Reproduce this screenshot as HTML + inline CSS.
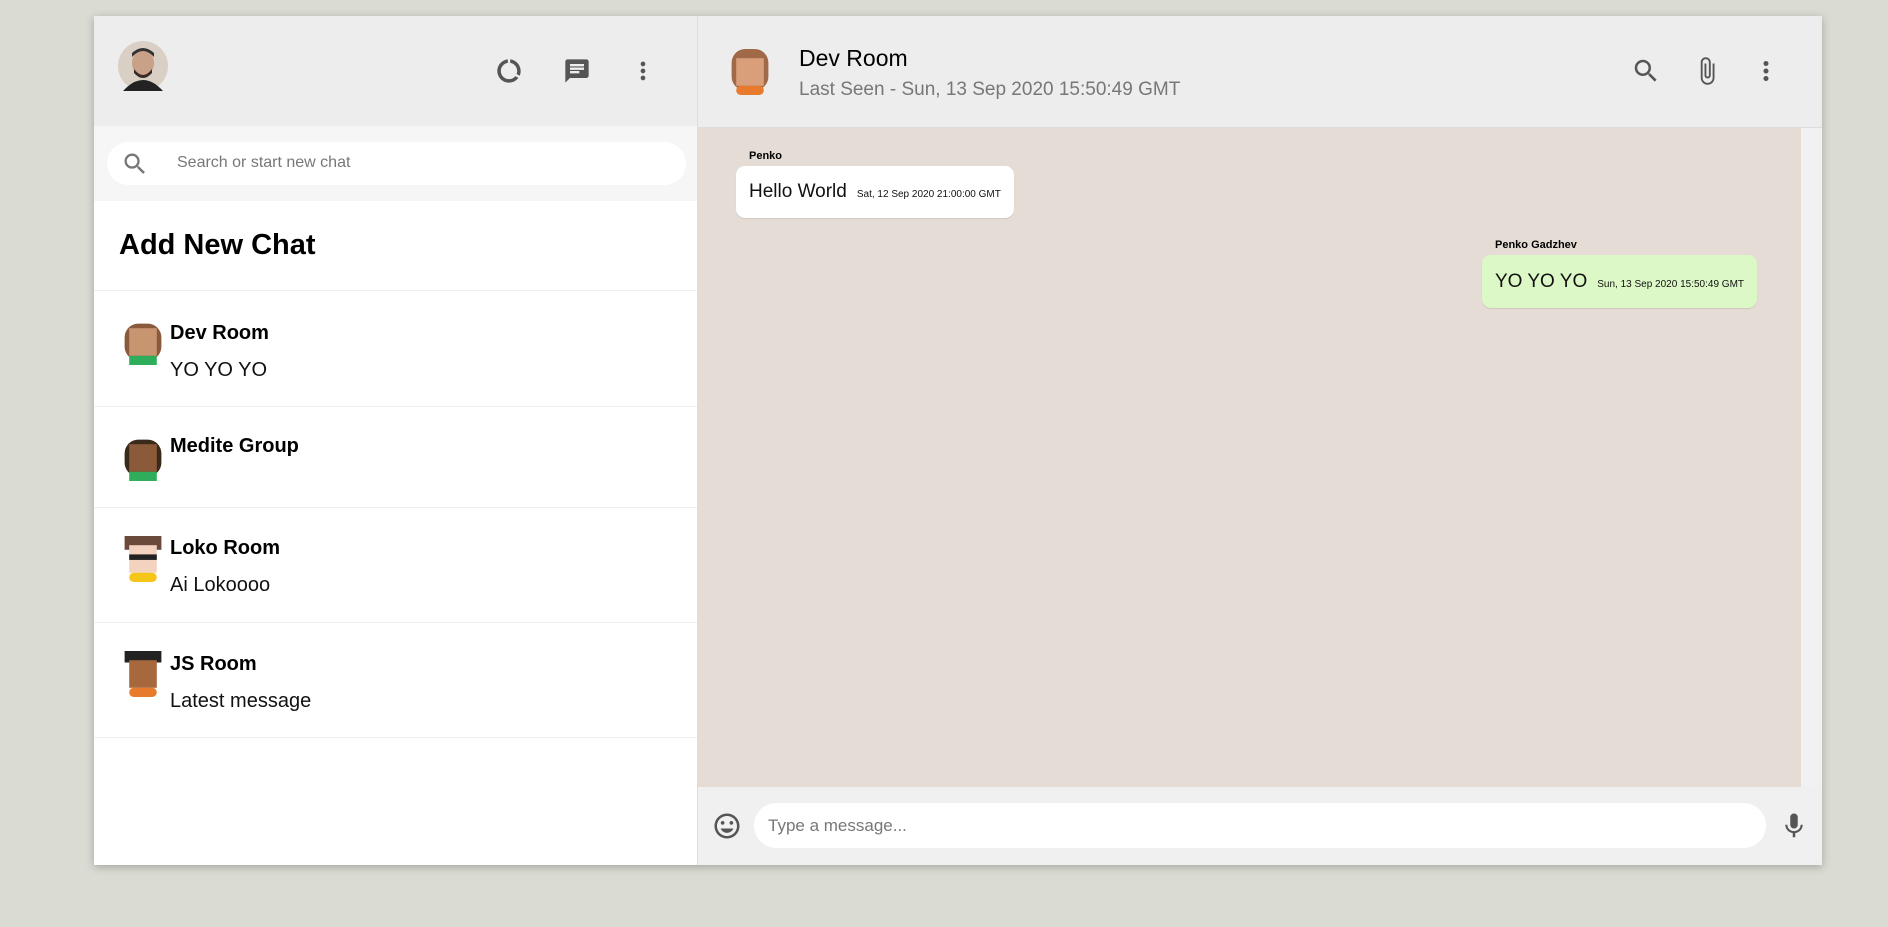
<!DOCTYPE html>
<html><head><meta charset="utf-8"><style>
*{box-sizing:border-box;margin:0;padding:0}
body{width:1888px;height:927px;background:#dadbd3;font-family:"Liberation Sans",sans-serif;position:relative;overflow:hidden}
.app{position:absolute;left:94px;top:16px;width:1728px;height:849px;background:#fff;box-shadow:0 2px 8px rgba(0,0,0,.25);overflow:hidden}
.side{position:absolute;left:0;top:0;width:604px;height:849px;border-right:1px solid #ddd;background:#fff}
.sh{height:110px;background:#ededed;position:relative}
.ico{position:absolute}
.search{height:75px;background:#f6f6f6;position:relative}
.pill{position:absolute;left:13px;top:16px;width:579px;height:43px;background:#fff;border-radius:22px}
.pill span{position:absolute;left:70px;top:12px;font-size:16px;color:#777}
.add{height:90px;border-bottom:1px solid #eee;position:relative}
.add h2{position:absolute;left:25px;top:28px;font-size:29px;font-weight:bold;color:#000}
.item{position:relative;border-bottom:1px solid #eee}
.item .av{position:absolute;left:26px;width:46px;height:46px}
.item .n{position:absolute;left:76px;font-size:20px;font-weight:bold;color:#000}
.item .m{position:absolute;left:76px;font-size:20px;color:#111}
.chat{position:absolute;left:604px;top:0;width:1124px;height:849px}
.ch{height:112px;background:#ededed;position:relative;border-bottom:1px solid #ddd}
.body{position:absolute;top:112px;left:0;width:1124px;height:659px;background:#e5ddd5}
.sb{position:absolute;right:0;top:0;width:21px;height:659px;background:#f1f1f1}
.foot{position:absolute;top:771px;left:0;width:1124px;height:78px;background:#f0f0f0}
.inp{position:absolute;left:56px;top:16px;width:1012px;height:45px;background:#fff;border-radius:23px}
.inp span{position:absolute;left:14px;top:13px;font-size:17px;color:#777}
.bub{position:absolute;border-radius:9px;padding:0 13px;font-size:19px;color:#111;box-shadow:0 1px 1px rgba(0,0,0,.1);white-space:nowrap}
.bub small{font-size:10px;margin-left:10px}
.nm{position:absolute;font-size:11px;font-weight:bold;color:#000;white-space:nowrap}
</style></head><body>
<div class="app">
<div class="side">
 <div class="sh">
  <svg class="ico" style="left:24px;top:25px" width="50" height="50"><circle cx="25" cy="25" r="25" fill="#d9cfc4"/><ellipse cx="25" cy="22" rx="11" ry="13" fill="#c9a088"/><path d="M14 16 Q25 4 36 16 L36 12 Q25 2 14 12Z" fill="#333"/><path d="M5 50 Q25 28 45 50Z" fill="#222"/><path d="M16 28 Q25 40 34 28 L34 32 Q25 42 16 32Z" fill="#3a2a22"/></svg>
  <svg class="ico" style="left:401px;top:41px" width="28" height="28" viewBox="0 0 24 24"><path fill="#555" d="M13 2.05v3.03c3.39.49 6 3.39 6 6.92 0 .9-.18 1.750-.48 2.54l2.6 1.53c.56-1.24.88-2.620.88-4.07 0-5.18-3.95-9.45-9-9.95zM12 19c-3.87 0-7-3.13-7-7 0-3.53 2.61-6.43 6-6.92V2.05c-5.06.5-9 4.76-9 9.95 0 5.52 4.47 10 9.99 10 3.31 0 6.24-1.61 8.06-4.09l-2.6-1.53C16.17 17.98 14.21 19 12 19z"/></svg>
  <svg class="ico" style="left:469px;top:41px" width="28" height="28" viewBox="0 0 24 24"><path fill="#555" d="M20 2H4c-1.1 0-2 .9-2 2v18l4-4h14c1.1 0 2-.9 2-2V4c0-1.1-.9-2-2-2zM6 9h12v2H6V9zm8 5H6v-2h8v2zm4-6H6V6h12v2z"/></svg>
  <svg class="ico" style="left:535px;top:41px" width="28" height="28" viewBox="0 0 24 24"><path fill="#555" d="M12 8c1.1 0 2-.9 2-2s-.9-2-2-2-2 .9-2 2 .9 2 2 2zm0 2c-1.1 0-2 .9-2 2s.9 2 2 2 2-.9 2-2-.9-2-2-2zm0 6c-1.1 0-2 .9-2 2s.9 2 2 2 2-.9 2-2-.9-2-2-2z"/></svg>
 </div>
 <div class="search"><div class="pill">
  <svg class="ico" style="left:14px;top:8px" width="28" height="28" viewBox="0 0 24 24"><path fill="#777" d="M15.5 14h-.79l-.28-.27A6.470 6.470 0 0 0 16 9.5 6.5 6.5 0 1 0 9.5 16c1.61 0 3.09-.59 4.23-1.57l.27.28v.79l5 4.99L20.49 19l-4.99-5zm-6 0C7.01 14 5 11.99 5 9.5S7.01 5 9.5 5 14 7.01 14 9.5 11.99 14 9.5 14z"/></svg>
  <span>Search or start new chat</span></div></div>
 <div class="add"><h2>Add New Chat</h2></div>
 <div class="item" style="height:116px"><svg class="av" style="top:28px" viewBox="0 0 10 10"><rect x="1" y="1" width="8" height="8" rx="3" fill="#8a5a3c"/><rect x="2" y="2" width="6" height="6" fill="#c99470"/><rect x="2" y="8" width="6" height="2" fill="#2eae5a"/></svg><div class="n" style="top:31px">Dev Room</div><div class="m" style="top:68px">YO YO YO</div></div>
 <div class="item" style="height:101px"><svg class="av" style="top:28px" viewBox="0 0 10 10"><rect x="1" y="1" width="8" height="8" rx="3" fill="#3a2a1a"/><rect x="2" y="2" width="6" height="6" fill="#8a5a3a"/><rect x="2" y="8" width="6" height="2" fill="#2eae5a"/></svg><div class="n" style="top:28px">Medite Group</div></div>
 <div class="item" style="height:115px"><svg class="av" style="top:28px" viewBox="0 0 10 10"><rect x="1" y="0" width="8" height="3" fill="#6a4a3a"/><rect x="2" y="2" width="6" height="6" fill="#f3d2c0"/><rect x="2" y="4" width="6" height="1.2" fill="#222"/><rect x="2" y="8" width="6" height="2" rx="1" fill="#f5c518"/></svg><div class="n" style="top:29px">Loko Room</div><div class="m" style="top:66px">Ai Lokoooo</div></div>
 <div class="item" style="height:115px"><svg class="av" style="top:28px" viewBox="0 0 10 10"><rect x="1" y="0" width="8" height="2.5" fill="#222"/><rect x="2" y="2" width="6" height="6" fill="#a8683e"/><rect x="2" y="8" width="6" height="2" rx="1" fill="#e87a2e"/></svg><div class="n" style="top:30px">JS Room</div><div class="m" style="top:67px">Latest message</div></div>
</div>
<div class="chat">
 <div class="ch">
  <svg class="ico" style="left:29px;top:33px" width="46" height="46" viewBox="0 0 10 10"><rect x="1" y="0" width="8" height="9" rx="3" fill="#a06a48"/><rect x="2" y="2" width="6" height="6" fill="#d99e7a"/><rect x="2" y="8" width="6" height="2" rx="1" fill="#e87a2e"/></svg>
  <div style="position:absolute;left:101px;top:29px;font-size:23px;color:#000">Dev Room</div>
  <div style="position:absolute;left:101px;top:63px;font-size:19px;color:#777">Last Seen - Sun, 13 Sep 2020 15:50:49 GMT</div>
  <svg class="ico" style="left:933px;top:40px" width="30" height="30" viewBox="0 0 24 24"><path fill="#555" d="M15.5 14h-.79l-.28-.27A6.470 6.470 0 0 0 16 9.5 6.5 6.5 0 1 0 9.5 16c1.61 0 3.09-.59 4.23-1.57l.27.28v.79l5 4.99L20.49 19l-4.99-5zm-6 0C7.01 14 5 11.99 5 9.5S7.01 5 9.5 5 14 7.01 14 9.5 11.99 14 9.5 14z"/></svg>
  <svg class="ico" style="left:994px;top:40px" width="30" height="30" viewBox="0 0 24 24"><path fill="#555" d="M16.5 6v11.5c0 2.21-1.790 4-4 4s-4-1.79-4-4V5a2.5 2.5 0 0 1 5 0v10.5c0 .55-.45 1-1 1s-1-.45-1-1V6H10v9.5a2.5 2.5 0 0 0 5 0V5c0-2.21-1.79-4-4-4S7 2.79 7 5v12.5c0 3.04 2.46 5.5 5.5 5.5s5.5-2.46 5.5-5.5V6h-1.5z"/></svg>
  <svg class="ico" style="left:1053px;top:40px" width="30" height="30" viewBox="0 0 24 24"><path fill="#555" d="M12 8c1.1 0 2-.9 2-2s-.9-2-2-2-2 .9-2 2 .9 2 2 2zm0 2c-1.1 0-2 .9-2 2s.9 2 2 2 2-.9 2-2-.9-2-2-2zm0 6c-1.1 0-2 .9-2 2s.9 2 2 2 2-.9 2-2-.9-2-2-2z"/></svg>
 </div>
 <div class="body">
  <div class="nm" style="left:51px;top:22px">Penko</div>
  <div class="bub" style="left:38px;top:38px;height:52px;line-height:52px;background:#fff">Hello World<small>Sat, 12 Sep 2020 21:00:00 GMT</small></div>
  <div class="nm" style="left:797px;top:111px">Penko Gadzhev</div>
  <div class="bub" style="left:784px;top:127px;height:53px;line-height:53px;background:#dcf8c6">YO YO YO<small>Sun, 13 Sep 2020 15:50:49 GMT</small></div>
  <div class="sb"></div>
 </div>
 <div class="foot">
  <svg class="ico" style="left:14px;top:24px" width="30" height="30" viewBox="0 0 24 24"><path fill="#555" d="M11.99 2C6.47 2 2 6.48 2 12s4.47 10 9.99 10C17.52 22 22 17.52 22 12S17.52 2 11.99 2zM12 20c-4.42 0-8-3.58-8-8s3.58-8 8-8 8 3.58 8 8-3.58 8-8 8zm3.5-9c.83 0 1.5-.67 1.5-1.5S16.33 8 15.5 8 14 8.67 14 9.5s.67 1.5 1.5 1.5zm-7 0c.83 0 1.5-.67 1.5-1.5S9.33 8 8.5 8 7 8.67 7 9.5 7.67 11 8.5 11zm3.5 6.5c2.33 0 4.31-1.46 5.11-3.5H6.89c.8 2.04 2.78 3.5 5.11 3.5z"/></svg>
  <div class="inp"><span>Type a message...</span></div>
  <svg class="ico" style="left:1081px;top:24px" width="30" height="30" viewBox="0 0 24 24"><path fill="#555" d="M12 14c1.66 0 2.99-1.34 2.99-3L15 5c0-1.66-1.34-3-3-3S9 3.34 9 5v6c0 1.66 1.34 3 3 3zm5.3-3c0 3-2.54 5.1-5.3 5.1S6.7 14 6.7 11H5c0 3.41 2.72 6.23 6 6.72V21h2v-3.28c3.28-.48 6-3.3 6-6.72h-1.7z"/></svg>
 </div>
</div>
</div>
</body></html>
